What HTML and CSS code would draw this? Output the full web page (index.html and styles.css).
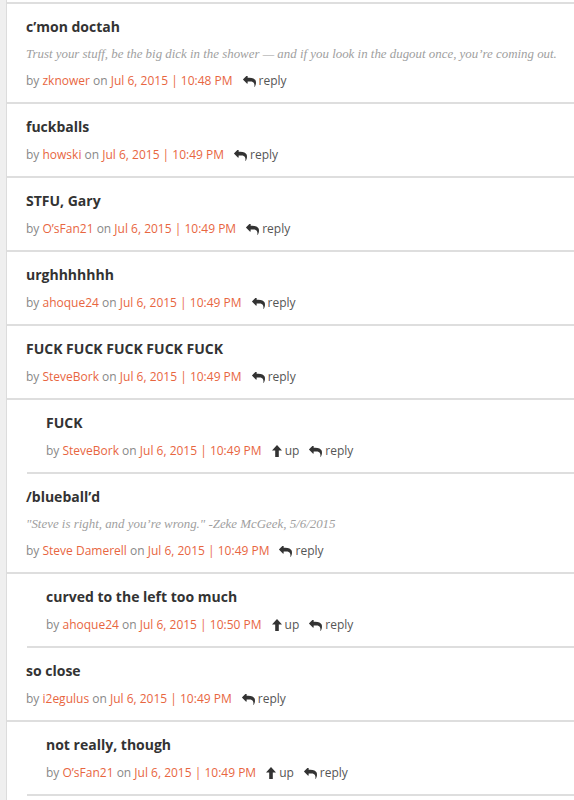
FILE: index.html
```html
<!DOCTYPE html>
<html>
<head>
<meta charset="utf-8">
<link rel="stylesheet" href="styles.css">
</head>
<body>
<svg width="0" height="0" class="defs">
  <defs>
    <symbol id="i-reply" viewBox="0 160 1792 1500"><path d="M1792 1120q0 166-127 451-3 7-10.5 24t-13.5 30-13 22q-12 17-28 17-15 0-23.5-10t-8.5-25q0-9 2.5-26.5t2.5-23.5q5-68 5-123 0-101-17.5-181t-48.5-138.5-80-101-105.5-69.5-133-42.5-154-21.5-175.5-6h-224v256q0 26-19 45t-45 19-45-19l-512-512q-19-19-19-45t19-45l512-512q19-19 45-19t45 19 19 45v256h224q713 0 875 403 53 134 53 333z"/></symbol>
    <symbol id="i-up" viewBox="0 0 10 12"><path d="M5 0 L10 5.5 H6.8 V12 H3.2 V5.5 H0 Z"/></symbol>
  </defs>
</svg>
<div class="thread">
  <div class="comment">
    <div class="title">c’mon doctah</div>
    <div class="body">Trust your stuff, be the big dick in the shower — and if you look in the dugout once, you’re coming out.</div>
    <div class="meta">by <a class="user">zknower</a> on <a class="date">Jul 6, 2015 | 10:48 PM</a><span class="act"><svg class="ic"><use href="#i-reply"/></svg>reply</span></div>
  </div>
  <div class="comment">
    <div class="title">fuckballs</div>
    <div class="meta">by <a class="user">howski</a> on <a class="date">Jul 6, 2015 | 10:49 PM</a><span class="act"><svg class="ic"><use href="#i-reply"/></svg>reply</span></div>
  </div>
  <div class="comment">
    <div class="title">STFU, Gary</div>
    <div class="meta">by <a class="user">O’sFan21</a> on <a class="date">Jul 6, 2015 | 10:49 PM</a><span class="act"><svg class="ic"><use href="#i-reply"/></svg>reply</span></div>
  </div>
  <div class="comment">
    <div class="title">urghhhhhhh</div>
    <div class="meta">by <a class="user">ahoque24</a> on <a class="date">Jul 6, 2015 | 10:49 PM</a><span class="act"><svg class="ic"><use href="#i-reply"/></svg>reply</span></div>
  </div>
  <div class="comment">
    <div class="title">FUCK FUCK FUCK FUCK FUCK</div>
    <div class="meta">by <a class="user">SteveBork</a> on <a class="date">Jul 6, 2015 | 10:49 PM</a><span class="act"><svg class="ic"><use href="#i-reply"/></svg>reply</span></div>
  </div>
  <div class="comment nested">
    <div class="title">FUCK</div>
    <div class="meta">by <a class="user">SteveBork</a> on <a class="date">Jul 6, 2015 | 10:49 PM</a><span class="act"><svg class="ic up"><use href="#i-up"/></svg>up</span><span class="act"><svg class="ic"><use href="#i-reply"/></svg>reply</span></div>
  </div>
  <div class="comment">
    <div class="title">/blueball’d</div>
    <div class="body">"Steve is right, and you’re wrong." -Zeke McGeek, 5/6/2015</div>
    <div class="meta">by <a class="user">Steve Damerell</a> on <a class="date">Jul 6, 2015 | 10:49 PM</a><span class="act"><svg class="ic"><use href="#i-reply"/></svg>reply</span></div>
  </div>
  <div class="comment nested">
    <div class="title">curved to the left too much</div>
    <div class="meta">by <a class="user">ahoque24</a> on <a class="date">Jul 6, 2015 | 10:50 PM</a><span class="act"><svg class="ic up"><use href="#i-up"/></svg>up</span><span class="act"><svg class="ic"><use href="#i-reply"/></svg>reply</span></div>
  </div>
  <div class="comment">
    <div class="title">so close</div>
    <div class="meta">by <a class="user">i2egulus</a> on <a class="date">Jul 6, 2015 | 10:49 PM</a><span class="act"><svg class="ic"><use href="#i-reply"/></svg>reply</span></div>
  </div>
  <div class="comment nested">
    <div class="title">not really, though</div>
    <div class="meta">by <a class="user">O’sFan21</a> on <a class="date">Jul 6, 2015 | 10:49 PM</a><span class="act"><svg class="ic up"><use href="#i-up"/></svg>up</span><span class="act"><svg class="ic"><use href="#i-reply"/></svg>reply</span></div>
  </div>
</div>
</body>
</html>
```
FILE: styles.css
```css
html, body {
  margin: 0;
  padding: 0;
  background: #efefef;
}
.defs {
  position: absolute;
  width: 0;
  height: 0;
}
.thread {
  margin-left: 6px;
  border-left: 1px solid #dcdcdc;
  background: #fff;
  padding-top: 2px;
  min-height: 800px;
  font-family: "Open Sans", sans-serif;
}
.thread::before {
  content: "";
  display: block;
  border-top: 2px solid #dedede;
}
.comment {
  border-bottom: 2px solid #dedede;
  padding: 13px 0 11px 19px;
}
.comment.nested {
  margin-left: 20px;
}
.title {
  font-size: 14px;
  font-weight: 700;
  line-height: 20px;
  height: 20px;
  color: #333;
}
.body {
  margin-top: 7px;
  font-family: "Liberation Serif", serif;
  font-style: italic;
  font-size: 12.9px;
  line-height: 20px;
  height: 19px;
  color: #a0a0a0;
}
.meta {
  margin-top: 8px;
  font-size: 12px;
  line-height: 20px;
  height: 20px;
  color: #888;
  display: flex;
  align-items: center;
  white-space: pre;
}
.user, .date {
  color: #e8663f;
}
.act {
  display: inline-flex;
  align-items: center;
  margin-left: 10px;
  color: #555;
}
.ic {
  width: 13px;
  height: 11px;
  fill: #333;
  margin-right: 3px;
}
.ic.up {
  width: 10px;
  height: 12px;
}
```
